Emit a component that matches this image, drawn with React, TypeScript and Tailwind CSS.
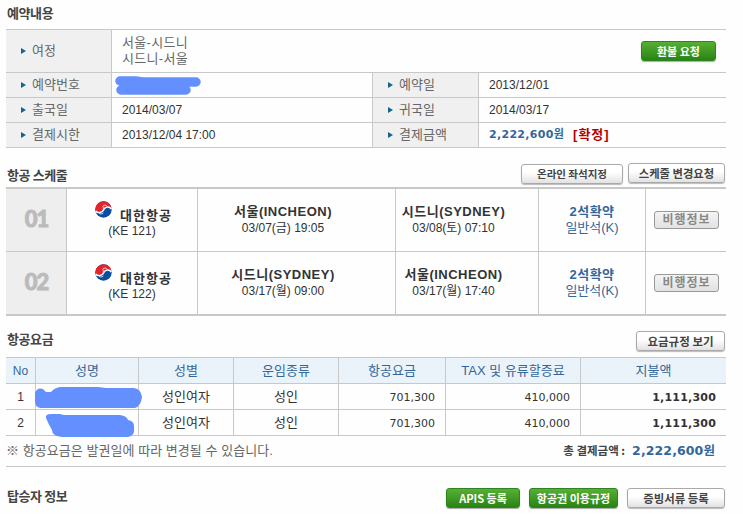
import type { ReactNode } from "react"

const GULIM = "font-['Liberation_Sans','Noto_Sans_CJK_KR',sans-serif]"
const GULIM_BOLD = "font-['Liberation_Sans','Noto_Sans_CJK_KR',sans-serif] font-bold"
const VERDANA = "font-['DejaVu_Sans','Noto_Sans_CJK_KR',sans-serif]"
const NOTO = "font-['Noto_Sans_CJK_KR',sans-serif]"

function Title({ children }: { children: ReactNode }) {
  return <h2 className={`${NOTO} pl-px text-[13px] leading-[16px] font-bold tracking-[-0.4px] text-[#444]`}>{children}</h2>
}

function GreenButton({ className, children }: { className: string; children: ReactNode }) {
  return (
    <button
      className={`${NOTO} ${className} h-[20px] rounded-[3px] border border-[#2f8420] bg-linear-to-b from-[#56b033] to-[#288414] text-[11px] leading-[17px] font-bold text-white shadow-[0_1px_1px_#aaa] whitespace-nowrap`}
    >
      {children}
    </button>
  )
}

function WhiteButton({ className, children }: { className: string; children: ReactNode }) {
  return (
    <button
      className={`${NOTO} ${className} h-[20px] rounded-[3px] border border-[#a9a9a9] bg-linear-to-b from-white from-40% to-[#e2e2e2] leading-[16px] font-bold text-[#444] shadow-[0_1px_1px_#bbb] whitespace-nowrap`}
    >
      {children}
    </button>
  )
}

function Label({ children }: { children: ReactNode }) {
  return (
    <div className="flex items-center border-r border-[#c8c8c8] bg-[#f0f0f0] pl-[15px] text-[#666]">
      <svg width="5" height="6" viewBox="0 0 5 6" className="mr-[6px]">
        <path d="M0 0 L5 3 L0 6 Z" fill="#14648f" />
      </svg>
      {children}
    </div>
  )
}

function AirlineLogo() {
  return (
    <svg width="17" height="17" viewBox="0 0 17 17">
      <circle cx="8.5" cy="8.5" r="8.2" fill="#0b4da2" />
      <path d="M0.5 10.4 A8.2 8.2 0 1 1 16.6 7.4 C15.6 5 10.4 4.4 9.4 7.6 C8.6 11.4 3.6 12.8 0.5 10.4 Z" fill="#e5232b" />
      <path d="M0.6 10 C3 12.8 7.4 11.8 8.8 8.6 C10 5.4 14.2 5 16.4 8" fill="none" stroke="white" strokeWidth="1.4" />
      <path d="M8.2 9.4 C9 5.6 6.8 5.2 8.6 4.4 C10 3.8 11.4 4.4 12.2 5.2" fill="none" stroke="white" strokeWidth="0.8" />
      <path d="M3.6 11.6 C4.4 13.2 7 13.4 8.4 12" fill="none" stroke="white" strokeWidth="0.8" />
    </svg>
  )
}

const flights = [
  { no: "01", code: "(KE 121)", from: "서울(INCHEON)", dep: "03/07(금) 19:05", to: "시드니(SYDNEY)", arr: "03/08(토) 07:10" },
  { no: "02", code: "(KE 122)", from: "시드니(SYDNEY)", dep: "03/17(월) 09:00", to: "서울(INCHEON)", arr: "03/17(월) 17:40" },
]

function Stop({ city, time }: { city: string; time: string }) {
  return (
    <div className="border-r border-[#c8c8c8] pt-[15px] pr-[27px] text-center leading-[16px]">
      <div className={`${GULIM_BOLD} tracking-[0.5px]`}>{city}</div>
      <div className="text-[12px]">{time}</div>
    </div>
  )
}

function Reservation() {
  const row = "grid h-[25px] grid-cols-[106px_261px_106px_1fr] border-b border-[#c8c8c8]"
  return (
    <div className="border-t border-[#c8c8c8] text-[#333]">
      <div className="grid h-[43px] grid-cols-[106px_1fr] border-b border-[#c8c8c8]">
        <Label>여정</Label>
        <div className="flex items-center justify-between pr-[10px] pl-[10px] leading-[16px] text-[#666]">
          <div className="tracking-[0.3px]">
            <div>서울-시드니</div>
            <div>시드니-서울</div>
          </div>
          <GreenButton className="w-[75px]">환불 요청</GreenButton>
        </div>
      </div>
      <div className={row}>
        <Label>예약번호</Label>
        <div className="relative border-r border-[#c8c8c8]">
          <svg className="absolute top-[2px] left-[2px]" width="88" height="21" viewBox="0 0 88 21">
            <path d="M6 6 H22 L28 7 H82 M7 15 H72" fill="none" stroke="#6490ff" strokeWidth="9.5" strokeLinecap="round" />
          </svg>
        </div>
        <Label>예약일</Label>
        <div className="flex items-center pl-[10px] text-[12px]">2013/12/01</div>
      </div>
      <div className={row}>
        <Label>출국일</Label>
        <div className="flex items-center border-r border-[#c8c8c8] pl-[10px] text-[12px]">2014/03/07</div>
        <Label>귀국일</Label>
        <div className="flex items-center pl-[10px] text-[12px]">2014/03/17</div>
      </div>
      <div className={row}>
        <Label>결제시한</Label>
        <div className="flex items-center border-r border-[#c8c8c8] pl-[10px] text-[12px]">2013/12/04 17:00</div>
        <Label>결제금액</Label>
        <div className={`${VERDANA} flex items-center pl-[10px] text-[11px] font-bold tracking-[0.3px] text-[#336699]`}>
          2,222,600원 <span className={`${GULIM_BOLD} ml-[9px] text-[13px] tracking-[1px] text-[#b30000]`}>[확정]</span>
        </div>
      </div>
    </div>
  )
}

function Schedule() {
  return (
    <div className="border-t-2 border-b-2 border-[#c8c8c8] text-[#333]">
      {flights.map((f, i) => (
        <div
          key={f.no}
          className={`grid grid-cols-[61px_131px_198px_143px_107px_1fr] ${i === 0 ? "h-[63px] border-b border-[#c8c8c8]" : "h-[62px]"}`}
        >
          <div className="flex items-center justify-center border-r border-[#c8c8c8] bg-[#eee] pb-[3px] pl-px font-[Lato] text-[22px] font-black tracking-[-1px] text-[#bbb] [-webkit-text-stroke:0.9px_#bbb]">
            {f.no}
          </div>
          <div className="border-r border-[#c8c8c8] pt-[12px] text-center">
            <div className="flex h-[22px] justify-center gap-[8px] pl-[3px]">
              <AirlineLogo />
              <span className={`${GULIM_BOLD} pt-[7px] leading-[16px] tracking-[1px]`}>대한항공</span>
            </div>
            <div className="text-[12px] leading-[16px]">{f.code}</div>
          </div>
          <Stop city={f.from} time={f.dep} />
          <Stop city={f.to} time={f.arr} />
          <div className="border-r border-[#c8c8c8] pt-[15px] text-center leading-[16px] text-[#336699]">
            <div className={`${GULIM_BOLD} tracking-[0.5px]`}>2석확약</div>
            <div>일반석(K)</div>
          </div>
          <div className="flex items-center justify-center">
            <button
              className={`${GULIM_BOLD} h-[18px] w-[65px] rounded-[3px] border border-[#999] bg-linear-to-b from-[#f4f4f4] to-[#e2e2e2] pl-px text-[12px] leading-[15px] tracking-[1px] text-[#888]`}
            >
              비행정보
            </button>
          </div>
        </div>
      ))}
    </div>
  )
}

const heads = ["No", "성명", "성별", "운임종류", "항공요금", "TAX 및 유류할증료", "지불액"]

function Fares() {
  const cols = "grid grid-cols-[30px_103px_95px_105px_107px_135px_1fr] border-b border-[#c8c8c8]"
  const cell = "flex items-center justify-center border-r border-[#c8c8c8]"
  const price = "flex items-center justify-end pt-[4px] pr-[10px] text-[11px]"
  return (
    <div className="border-t border-[#c8c8c8] text-[#333]">
      <div className={`${cols} h-[26px] bg-[#ebf3fa] text-[#336699]`}>
        {heads.map((h) => (
          <div key={h} className={`${cell} last:border-r-0 first:text-[12px]`}>{h}</div>
        ))}
      </div>
      {[1, 2].map((n) => (
        <div key={n} className={`${cols} h-[26px]`}>
          <div className={`${cell} text-[12px]`}>{n}</div>
          <div className={`${cell} relative`}>
            {n === 1 ? (
              <svg className="absolute top-[2px] left-[-2px] z-10" width="110" height="24" viewBox="0 0 110 24">
                <path d="M1 7 Q3 1 9 3 L12 6 H17 Q20 2 26 1 H64 L72 2 H100 Q107 3 108 11 Q107 20 101 22 H7 Q1 22 1 15 Z" fill="#6490ff" />
              </svg>
            ) : (
              <svg className="absolute top-[2px] left-[8px] z-10" width="94" height="26" viewBox="0 0 94 26">
                <path d="M2 6 Q1 2 7 2 H16 L20 3 H76 Q83 4 84 8 Q90 9 90 14 V20 Q89 24 84 25 H18 Q8 24 8 18 Q4 11 2 6 Z" fill="#6490ff" />
              </svg>
            )}
          </div>
          <div className={cell}>성인여자</div>
          <div className={cell}>성인</div>
          <div className={`${VERDANA} ${price} border-r border-[#c8c8c8]`}>701,300</div>
          <div className={`${VERDANA} ${price} border-r border-[#c8c8c8]`}>410,000</div>
          <div className={`${VERDANA} ${price} font-bold tracking-[0.2px]`}>1,111,300</div>
        </div>
      ))}
      <div className="flex h-[31px] items-center justify-between border-b border-[#c8c8c8] pr-[11px] text-[#666]">
        <span className="tracking-[0.05px]">※ 항공요금은 발권일에 따라 변경될 수 있습니다.</span>
        <span className="flex items-center">
          <span className={`${NOTO} mr-[7px] text-[11.5px] font-bold text-[#444]`}>총 결제금액 :</span>
          <span className={`${VERDANA} text-[12.5px] font-bold tracking-[0.1px] text-[#336699]`}>2,222,600원</span>
        </span>
      </div>
    </div>
  )
}

export default function App() {
  return (
    <div className={`${GULIM} h-[514px] w-[743px] overflow-hidden bg-[#fefefe] pl-[6px] text-[13px]`}>
      <div className="w-[720px]">
        <div className="h-[29px] pt-[5px]">
          <Title>예약내용</Title>
        </div>
        <Reservation />
        <div className="flex h-[39px] items-start justify-between pt-[15px] pr-px">
          <div className="pt-[4px]">
            <Title>항공 스케줄</Title>
          </div>
          <div className="flex items-start gap-[5px]">
            <WhiteButton className="mt-[1px] w-[102px] text-[10.5px]">온라인 좌석지정</WhiteButton>
            <WhiteButton className="w-[97px] text-[11.3px]">스케줄 변경요청</WhiteButton>
          </div>
        </div>
        <Schedule />
        <div className="flex h-[41px] items-start justify-between pt-[15px] pr-px">
          <Title>항공요금</Title>
          <WhiteButton className="w-[89px] text-[11.5px]">요금규정 보기</WhiteButton>
        </div>
        <Fares />
        <div className="flex items-start justify-between pt-[21px] pr-px">
          <Title>탑승자 정보</Title>
          <div className="flex gap-[9px]">
            <GreenButton className="w-[74px]">APIS 등록</GreenButton>
            <GreenButton className="w-[89px]">항공권 이용규정</GreenButton>
            <WhiteButton className="w-[98px] text-[11.4px]">증빙서류 등록</WhiteButton>
          </div>
        </div>
      </div>
    </div>
  )
}
